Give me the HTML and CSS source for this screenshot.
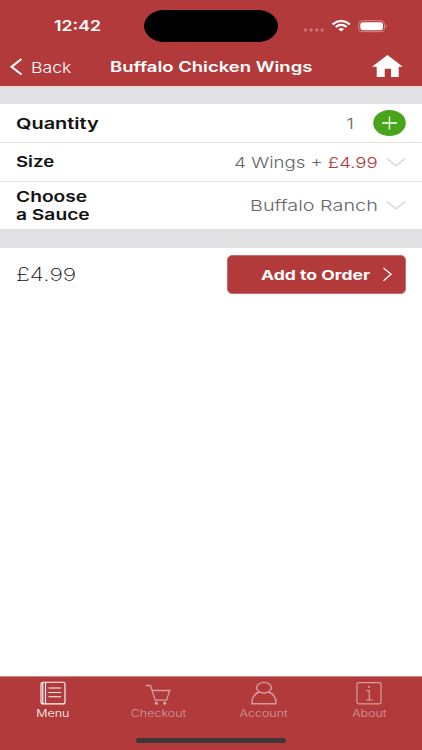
FILE: index.html
```html
<!DOCTYPE html>
<html lang="en">
<head>
<meta charset="utf-8">
<title>Buffalo Chicken Wings</title>
<link rel="stylesheet" href="styles.css">
</head>
<body>
<div class="app">
  <header class="header">
    <div class="status">
      <span class="clock wide">12:42</span>
      <div class="island"></div>
      <svg class="indicators" width="86" height="16" viewBox="0 0 86 16">
        <g fill="#d07375"><circle cx="3.500" cy="12" r="1.700"/><circle cx="9" cy="12" r="1.700"/><circle cx="14.700" cy="12" r="1.700"/><circle cx="20.200" cy="12" r="1.700"/></g>
        <path d="M30.500 6.300Q39.200-.5 47.900 6.300M33.700 9Q39.200 4.800 44.700 9" fill="none" stroke="#fff" stroke-width="2.100"/>
        <path d="M36.300 11Q39.200 8.900 42.100 11L39.200 13.600Z" fill="#fff"/>
        <rect x="56.700" y="2.700" width="25.800" height="11" rx="3.600" fill="none" stroke="#dc9395" stroke-width=".9"/>
        <rect x="58.300" y="4.200" width="22.700" height="8" rx="2.400" fill="#fff"/>
        <path d="M83.800 6.400Q86 8 83.800 9.700Z" fill="#dc9395"/>
      </svg>
    </div>
    <nav class="navbar">
      <svg class="back-arrow" width="14" height="18" viewBox="0 0 14 18"><path d="M12.500 1L2.500 8.800L12.500 16.500" fill="none" stroke="#fff" stroke-width="2.100"/></svg>
      <span class="back wide">Back</span>
      <h1 class="title wide">Buffalo Chicken Wings</h1>
      <svg class="home" width="32" height="24" viewBox="0 0 32 24"><path d="M15.500 1L30.800 12.700H26.700V23H19V14.700H12.700V23H4.700V12.700H0Z" fill="#fff"/></svg>
    </nav>
  </header>
  <div class="band"></div>
  <main>
    <section class="row">
      <span class="label wide l-qty">Quantity</span>
      <span class="value wide one">1</span>
      <svg class="plus" width="33" height="27" viewBox="0 0 33 27"><ellipse cx="16.500" cy="13" rx="16.300" ry="13" fill="#48a51b"/><path d="M9 13H24M16.500 6.500V19.500" stroke="#fff" stroke-width="1.400"/></svg>
    </section>
    <section class="row row-size">
      <span class="label wide l-size">Size</span>
      <span class="value wide v-size">4 Wings + <b>£4.99</b></span>
      <svg class="chevron" width="20" height="11" viewBox="0 0 20 11"><path d="M1 1.500L10 9L19 1.500" fill="none" stroke="#dedede" stroke-width="1.700"/></svg>
    </section>
    <section class="row row-sauce">
      <span class="label wide l-sauce">Choose<br>a Sauce</span>
      <span class="value wide v-sauce">Buffalo Ranch</span>
      <svg class="chevron" width="20" height="11" viewBox="0 0 20 11"><path d="M1 1.500L10 9L19 1.500" fill="none" stroke="#dedede" stroke-width="1.700"/></svg>
    </section>
    <div class="band band-low"></div>
    <section class="order">
      <span class="price wide">£4.99</span>
      <button class="add"><span class="add-text wide">Add to Order</span>
        <svg width="11" height="15" viewBox="0 0 11 15"><path d="M1.500 1L9 7.300L1.500 13.800" fill="none" stroke="#fff" stroke-width="1.400"/></svg>
      </button>
    </section>
  </main>
  <footer class="tabs">
    <div class="tab active">
      <svg width="28" height="25" viewBox="0 0 28 25" fill="none" stroke="currentColor" stroke-width="1.100"><rect x="2" y="1.300" width="24" height="21.600" rx="2"/><path d="M3.800 2V22.500M6.500 2V22.500M9.500 7H22M9.500 11.500H22M9.500 15.800H22"/></svg>
      <span class="wide t-menu">Menu</span>
    </div>
    <div class="tab">
      <svg width="28" height="25" viewBox="0 0 28 25" fill="none" stroke="currentColor" stroke-width="1.300"><path d="M1.800 4.500H6.500L11.200 19.200H23M7.900 9.500H25.700L22.500 19.200"/><g fill="currentColor" stroke="none"><circle cx="12.300" cy="22.200" r="1.600"/><circle cx="20.700" cy="22.200" r="1.600"/></g></svg>
      <span class="wide t-checkout">Checkout</span>
    </div>
    <div class="tab">
      <svg width="28" height="25" viewBox="0 0 28 25" fill="none" stroke="currentColor" stroke-width="1.400"><ellipse cx="14" cy="6.700" rx="7.400" ry="5.300"/><path d="M9.500 11Q2 13.500 2 21.500V22.800H26V21.500Q26 13.500 18.500 11"/></svg>
      <span class="wide t-account">Account</span>
    </div>
    <div class="tab">
      <svg width="28" height="25" viewBox="0 0 28 25" fill="none" stroke="currentColor" stroke-width="1.200"><rect x="2" y="1.700" width="24" height="21.200" rx="1.800"/><path d="M11.300 9.700H14.300V18.700M11 19H17.300"/><circle cx="14" cy="6" r="1.100" fill="currentColor" stroke="none"/></svg>
      <span class="wide t-about">About</span>
    </div>
    <div class="home-bar"></div>
  </footer>
</div>
</body>
</html>
```
FILE: styles.css
```css
* { box-sizing: border-box; }
body { margin: 0; font-family: Inter, "Liberation Sans", sans-serif; }
svg { display: block; flex: none; }
.app { width: 422px; height: 750px; display: flex; flex-direction: column; background: #fff; overflow: hidden; }
.wide { display: block; flex: none; white-space: nowrap; transform: scaleX(var(--sx, 1.25)); transform-origin: left center; }

.header { height: 87px; background: #b23a3b; border-bottom: 1px solid #e9cfd2; color: #fff; }
.status { height: 47px; padding-top: 10px; display: grid; grid-template-columns: 54px 90px 134px 24px 86px; align-items: start; }
.clock { grid-column: 2; font-size: 15px; line-height: 20px; padding-top: 6px; font-weight: 600; --sx: 1.18; }
.island { width: 134px; height: 32px; border-radius: 20px / 16px; background: #000; }
.indicators { grid-column: 5; margin-top: 8px; }
.navbar { height: 39px; display: grid; grid-template-columns: 9px 22px 79px 262px 32px; align-items: center; }
.back-arrow { grid-column: 2; }
.back { margin-top: 2px; font-size: 15px; line-height: 20px; font-weight: 300; --sx: 1.18; }
.title { margin: 1px 0 0; font-size: 14px; line-height: 20px; font-weight: 600; --sx: 1.32; }
.home { margin-top: -2px; }

.band { height: 17px; background: #e1e1e3; }
.row { height: 38px; display: flex; align-items: center; padding: 0 16px; }
.row-size { height: 39px; border-top: 1px solid #e5e5e7; }
.row-sauce { height: 48px; border-top: 1px solid #e5e5e7; }
.label { font-size: 15px; line-height: 18px; font-weight: 600; color: #111; }
.l-qty { padding-top: 2px; --sx: 1.33; }
.l-size { --sx: 1.24; }
.l-sauce { padding-top: 1px; --sx: 1.28; }
.value { margin-left: auto; font-size: 15px; line-height: 20px; font-weight: 300; color: #666; transform-origin: right center; }
.value b { font-weight: 300; color: #b23a3b; }
.v-size { padding-top: 1px; --sx: 1.24; }
.v-sauce { padding-top: 1px; --sx: 1.32; }
.one { margin-right: 19px; padding-top: 2px; }
.plus { margin-top: 1px; }
.chevron { margin-left: 8px; }
.band-low { height: 19px; }
.order { height: 53px; display: flex; justify-content: space-between; align-items: center; padding: 0 16px; }
.price { font-size: 18px; line-height: 24px; font-weight: 200; color: #111; --sx: 1.28; }
.add { width: 179px; height: 39px; padding: 0 12px 0 33px; display: flex; justify-content: space-between; align-items: center; background: #b23a3b; border: 1px solid #c96a6c; border-radius: 5px; color: #fff; font-family: inherit; }
.add-text { font-size: 13.5px; line-height: 20px; font-weight: 700; --sx: 1.3; }

.tabs { height: 74px; margin-top: auto; padding: 4px 0 7px; background: #b23a3b; border-top: 1px solid #d08a8c; display: grid; grid-template-columns: repeat(4, 1fr); grid-template-rows: 1fr auto; }
.tab { display: flex; flex-direction: column; align-items: center; color: #d39e9f; }
.tab.active { color: #fff; }
.tab .wide { padding-top: 1px; font-size: 9.7px; line-height: 14px; font-weight: 300; transform-origin: center; --sx: 1.29; }
.home-bar { grid-column: 1 / -1; justify-self: center; width: 150px; height: 5px; border-radius: 3px; background: #403637; }
```
